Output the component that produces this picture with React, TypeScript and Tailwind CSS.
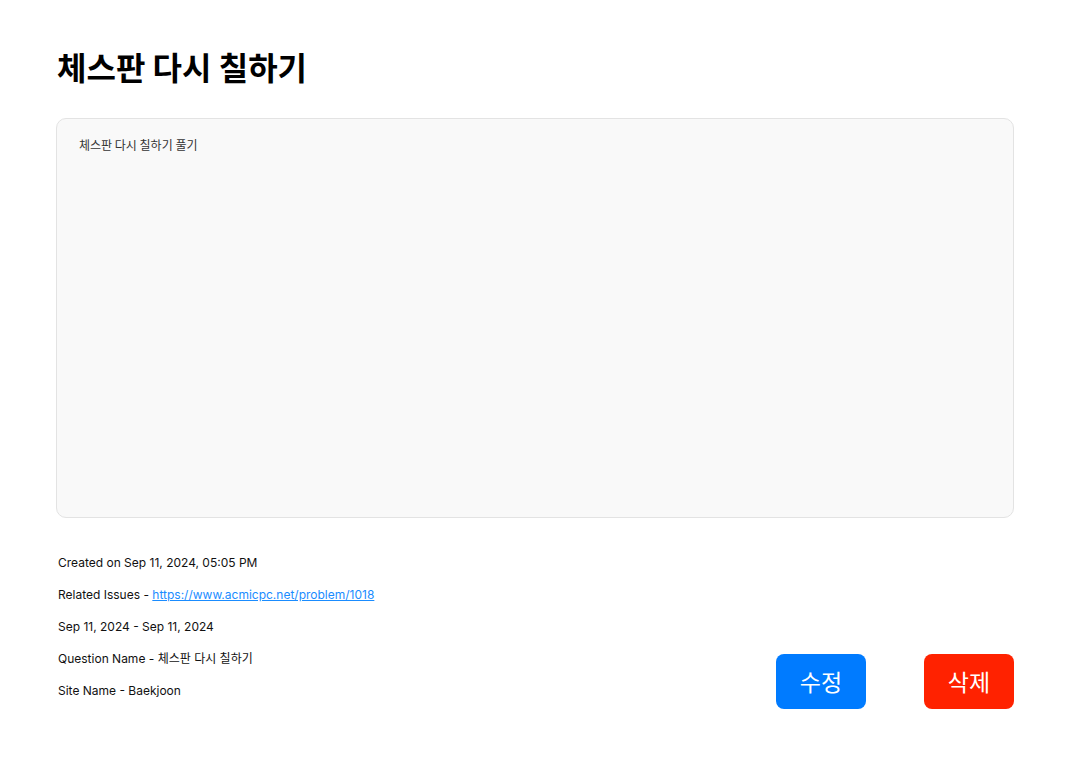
import React from "react";

export default function App() {
  const font = { fontFamily: '"Inter", "Noto Sans CJK KR", sans-serif' };
  return (
    <div className="min-h-[766px] bg-white pl-14 pr-[55px] pt-[46px] text-black" style={font}>
      <h1
        className="text-[32px] font-bold leading-[40px] pl-[1px]"
        style={{ fontFamily: '"Noto Sans CJK KR", "Inter", sans-serif' }}
      >
        체스판 다시 칠하기
      </h1>
      <div className="mt-[32px] h-[400px] rounded-[10px] border border-[#e3e3e3] bg-[#f9f9f9] px-[22px] pt-[18px]">
        <p
          className="text-[12px] leading-[16px] text-[#333]"
          style={{ fontFamily: '"Noto Sans CJK KR", sans-serif' }}
        >
          체스판 다시 칠하기 풀기
        </p>
      </div>
      <div className="mt-[37px] flex items-end justify-between">
        <div className="flex flex-col gap-4 pl-[2px] text-[12px] leading-[16px] text-[#111]">
          <p>Created on Sep 11, 2024, 05:05 PM</p>
          <p>
            Related Issues -{" "}
            <a href="#" className="text-[#1a8cff] underline">
              https://www.acmicpc.net/problem/1018
            </a>
          </p>
          <p>Sep 11, 2024 - Sep 11, 2024</p>
          <p>Question Name - 체스판 다시 칠하기</p>
          <p>Site Name - Baekjoon</p>
        </div>
        <div className="flex gap-[58px] mb-[-10px]">
          <button
            className="h-[55px] w-[90px] rounded-[8px] bg-[#007bff] text-[23px] text-white"
            style={{ fontFamily: '"Noto Sans CJK KR", sans-serif' }}
          >
            수정
          </button>
          <button
            className="h-[55px] w-[90px] rounded-[8px] bg-[#ff2200] text-[23px] text-white"
            style={{ fontFamily: '"Noto Sans CJK KR", sans-serif' }}
          >
            삭제
          </button>
        </div>
      </div>
    </div>
  );
}
